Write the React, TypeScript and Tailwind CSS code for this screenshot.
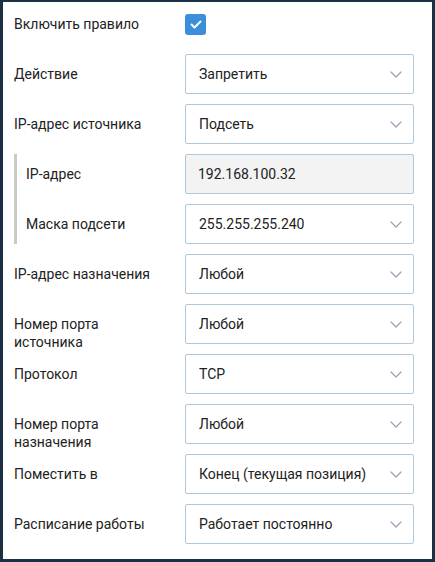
import React from 'react';

const Chevron: React.FC = () => (
  <svg width="12" height="7" viewBox="0 0 12 7" fill="none" className="shrink-0">
    <path d="M1 1l5 5 5-5" stroke="#94a3b6" strokeWidth="1.2" strokeLinecap="round" strokeLinejoin="round" />
  </svg>
);

const Select: React.FC<{ value: string }> = ({ value }) => (
  <div className="w-[229px] h-10 shrink-0 border border-[#afc9dc] rounded-[2px] bg-white flex items-center justify-between pl-[13px] pr-[11px] text-[14px] text-[#222]">
    <span>{value}</span>
    <Chevron />
  </div>
);

const TextInput: React.FC<{ value: string }> = ({ value }) => (
  <div className="w-[229px] h-10 shrink-0 border border-[#afc9dc] rounded-[2px] bg-[#f3f3f3] flex items-center pl-[12px] text-[14px] text-[#222]">
    {value}
  </div>
);

const Row: React.FC<{ label: React.ReactNode; children: React.ReactNode; labelWidth?: string }> = ({
  label,
  children,
  labelWidth = 'w-[171px]',
}) => (
  <div className="flex items-start h-10">
    <div className={`${labelWidth} shrink-0 pt-[11px] leading-[18px] text-[14px] text-[#222]`}>{label}</div>
    {children}
  </div>
);

const App: React.FC = () => {
  return (
    <div
      className="w-[435px] h-[562px] bg-white border-t-2 border-x-[3px] border-b-[3px] border-[#1b3044]"
      style={{ fontFamily: 'Roboto, "Liberation Sans", sans-serif' }}
    >
      <div className="pl-[11px] pt-[2px] flex flex-col gap-[10px]">
        <div className="flex items-center h-10">
          <div className="w-[171px] shrink-0 text-[14px] text-[#222]">Включить правило</div>
          <div className="w-[21px] h-[21px] rounded-[3px] bg-[#3a8fd8] flex items-center justify-center">
            <svg width="12" height="9" viewBox="0 0 12 9" fill="none">
              <path d="M1.5 4.5l3 3 6-6" stroke="white" strokeWidth="2" strokeLinecap="round" strokeLinejoin="round" />
            </svg>
          </div>
        </div>

        <Row label="Действие">
          <Select value="Запретить" />
        </Row>
        <Row label="IP-адрес источника">
          <Select value="Подсеть" />
        </Row>

        <div className="border-l-[3px] border-[#cacaca] pl-[9px] flex flex-col gap-[10px]">
          <Row label="IP-адрес" labelWidth="w-[159px]">
            <TextInput value="192.168.100.32" />
          </Row>
          <Row label="Маска подсети" labelWidth="w-[159px]">
            <Select value="255.255.255.240" />
          </Row>
        </div>

        <Row label="IP-адрес назначения">
          <Select value="Любой" />
        </Row>
        <Row label={<>Номер порта<br />источника</>}>
          <Select value="Любой" />
        </Row>
        <Row label="Протокол">
          <Select value="TCP" />
        </Row>
        <Row label={<>Номер порта<br />назначения</>}>
          <Select value="Любой" />
        </Row>
        <Row label="Поместить в">
          <Select value="Конец (текущая позиция)" />
        </Row>
        <Row label="Расписание работы">
          <Select value="Работает постоянно" />
        </Row>
      </div>
    </div>
  );
};

export default App;
